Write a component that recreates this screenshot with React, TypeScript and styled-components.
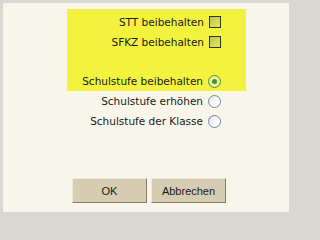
import * as React from 'react';
import styled, { createGlobalStyle, css } from 'styled-components';

const GlobalStyle = createGlobalStyle`
  html, body {
    margin: 0;
    padding: 0;
    background: #d9d7d1;
  }
`;

const Frame = styled.div`
  box-sizing: border-box;
  width: 298px;
  height: 217px;
  border-style: solid;
  border-color: #d9d7d1;
  border-width: 3px 9px 5px 3px;
  background: #f8f6ea;
  display: flex;
  flex-direction: column;
  font-family: "DejaVu Sans", Verdana, sans-serif;
  font-size: 10.5px;
  color: #1a1a1a;
`;

const Options = styled.div`
  margin: 6px 0 0 64px;
  width: 179px;
  display: flex;
  flex-direction: column;
`;

const Highlight = styled.div`
  background: #f3f23e;
  padding-top: 3px;
  height: 82px;
  box-sizing: border-box;
  display: flex;
  flex-direction: column;
`;

const Row = styled.label<{ $blank?: boolean }>`
  height: ${({ $blank }) => ($blank ? '19px' : '20px')};
  display: flex;
  align-items: center;
  justify-content: flex-end;
  gap: 5px;
  padding-right: 25px;
  white-space: nowrap;
`;

const Check = styled.span`
  box-sizing: border-box;
  width: 12px;
  height: 12px;
  border: 1px solid #2f3a1c;
  background: linear-gradient(135deg, #b9bf58 0%, #d6da50 55%, #e8e84a 100%);
`;

const Radio = styled.span<{ $checked?: boolean }>`
  box-sizing: border-box;
  width: 13px;
  height: 13px;
  border-radius: 50%;
  display: flex;
  align-items: center;
  justify-content: center;
  ${({ $checked }) =>
    $checked
      ? css`
          border: 1px solid #4f8a3a;
          background: #e6f39a;
          &::after {
            content: '';
            width: 5px;
            height: 5px;
            border-radius: 50%;
            background: #3f9a24;
          }
        `
      : css`
          border: 1px solid #6f86a8;
          background: linear-gradient(135deg, #dfe3e6 0%, #ffffff 70%);
        `}
`;

const Buttons = styled.div`
  margin-top: auto;
  margin-bottom: 9px;
  padding-left: 69px;
  display: flex;
  gap: 4px;
`;

const Button = styled.button`
  box-sizing: border-box;
  width: 75px;
  height: 25px;
  padding: 0;
  background: #d5ccb2;
  border: 1px solid;
  border-color: #efe9da #857d68 #857d68 #efe9da;
  font-family: "Liberation Sans", Arial, sans-serif;
  font-size: 11px;
  color: #1a1a1a;
`;

export default function App() {
  return (
    <>
      <GlobalStyle />
      <Frame>
        <Options>
          <Highlight>
            <Row>STT beibehalten <Check /></Row>
            <Row>SFKZ beibehalten <Check /></Row>
            <Row $blank />
            <Row>Schulstufe beibehalten <Radio $checked /></Row>
          </Highlight>
          <Row>Schulstufe erhöhen <Radio /></Row>
          <Row>Schulstufe der Klasse <Radio /></Row>
        </Options>
        <Buttons>
          <Button>OK</Button>
          <Button>Abbrechen</Button>
        </Buttons>
      </Frame>
    </>
  );
}
